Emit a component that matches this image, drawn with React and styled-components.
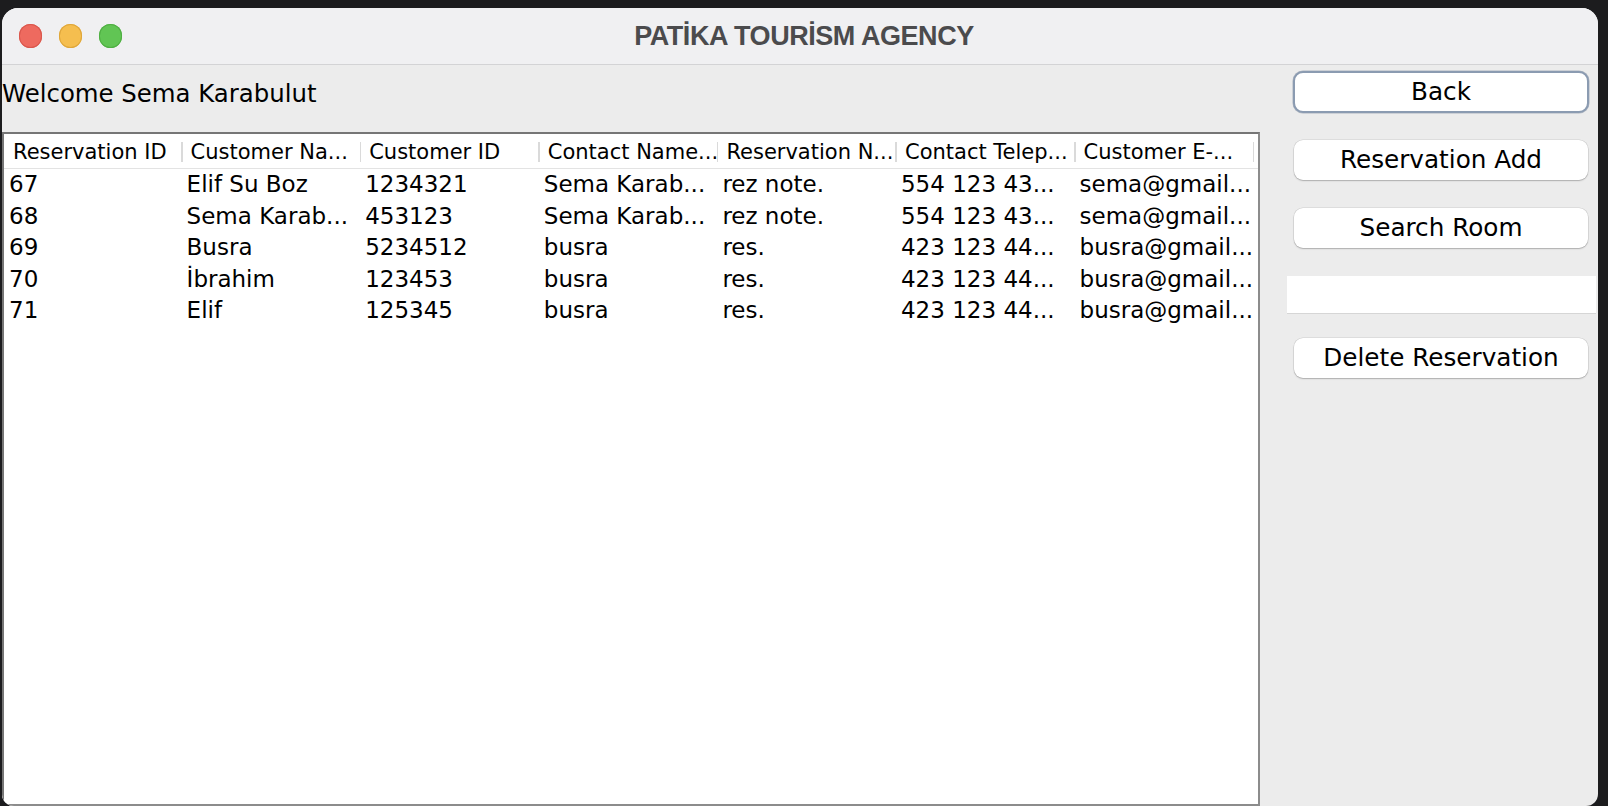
import styled, { createGlobalStyle } from "styled-components";

const GlobalStyle = createGlobalStyle`
    html, body {
        margin: 0;
        padding: 0;
        background: #1c1c1e;
    }
    * {
        box-sizing: border-box;
    }
`;

const columns = [
    "Reservation ID",
    "Customer Na...",
    "Customer ID",
    "Contact Name...",
    "Reservation N...",
    "Contact Telep...",
    "Customer E-...",
];

const reservations = [
    ["67", "Elif Su Boz", "1234321", "Sema Karab...", "rez note.", "554 123 43...", "sema@gmail..."],
    ["68", "Sema Karab...", "453123", "Sema Karab...", "rez note.", "554 123 43...", "sema@gmail..."],
    ["69", "Busra", "5234512", "busra", "res.", "423 123 44...", "busra@gmail..."],
    ["70", "İbrahim", "123453", "busra", "res.", "423 123 44...", "busra@gmail..."],
    ["71", "Elif", "125345", "busra", "res.", "423 123 44...", "busra@gmail..."],
];

const Desktop = styled.div`
    height: 806px;
    padding: 8px 10px 0 2px;
    background: #1c1c1e;
    overflow: hidden;
`;

const Window = styled.div`
    height: 798px;
    display: flex;
    flex-direction: column;
    background: #ececec;
    border-radius: 16px 16px 12px 12px;
    overflow: hidden;
`;

const TitleBar = styled.div`
    height: 57px;
    flex-shrink: 0;
    display: grid;
    grid-template-columns: 1fr auto 1fr;
    align-items: center;
    background: #f0f0f2;
    border-bottom: 1px solid #d3d3d5;
`;

const Lights = styled.div`
    display: flex;
    gap: 16.5px;
    padding-left: 16.5px;
`;

const Light = styled.span`
    width: 23.5px;
    height: 23.5px;
    border-radius: 50%;
    background: ${(p) => p.$color};
    box-shadow: inset 0 0 0 1px ${(p) => p.$edge};
`;

const Title = styled.div`
    font-family: "Liberation Sans", Arial, sans-serif;
    font-weight: 700;
    font-size: 27px;
    letter-spacing: -0.45px;
    color: #4b4b4d;
    padding-left: 8px;
`;

const Body = styled.div`
    flex: 1;
    min-height: 0;
    display: grid;
    grid-template-columns: 1258px 1fr;
    font-family: "DejaVu Sans", Verdana, sans-serif;
    color: #000;
`;

const Main = styled.div`
    display: flex;
    flex-direction: column;
    min-height: 0;
`;

const Welcome = styled.div`
    font-size: 24.4px;
    line-height: 28px;
    padding-top: 15px;
    margin-bottom: 24px;
`;

const Table = styled.div`
    flex: 1;
    background: #fff;
    border: 2px solid #8c8c8c;
    border-top-color: #767676;
    border-left-color: #767676;
    overflow: hidden;
`;

const Row = styled.div`
    display: grid;
    grid-template-columns: repeat(7, 178.6px) 1fr;
    height: ${(p) => (p.$header ? "35px" : "31.5px")};
    padding-top: ${(p) => (p.$header ? "1px" : "0")};
    border-bottom: ${(p) => (p.$header ? "1px solid #e3e3e3" : "none")};
`;

const HeadCell = styled.div`
    position: relative;
    display: flex;
    align-items: center;
    padding-left: ${(p) => (p.$first ? "9px" : "8px")};
    font-size: 21px;
    white-space: nowrap;
    overflow: hidden;

    &::after {
        content: "";
        position: absolute;
        right: 0;
        top: 7px;
        bottom: 6px;
        width: 1.5px;
        background: #dadada;
    }
`;

const Cell = styled.div`
    padding-left: ${(p) => (p.$first ? "5px" : "4px")};
    font-size: 23px;
    line-height: 31.5px;
    white-space: nowrap;
    overflow: hidden;
`;

const Side = styled.div`
    display: flex;
    flex-direction: column;
    padding-top: 6px;
`;

const Button = styled.button`
    width: ${(p) => (p.$focused ? "296px" : "294px")};
    height: ${(p) => (p.$focused ? "42px" : "40px")};
    margin-top: ${(p) => p.$mt}px;
    margin-left: ${(p) => (p.$focused ? "33px" : "34px")};
    padding: 0 0 2px;
    background: #fff;
    border: ${(p) => (p.$focused ? "2px solid #8b9bb1" : "none")};
    border-radius: ${(p) => (p.$focused ? "10px" : "9px")};
    box-shadow: ${(p) =>
        p.$focused
            ? "0 0 0 0.5px rgba(80, 100, 130, 0.4)"
            : "0 0 0 0.5px rgba(0, 0, 0, 0.12), 0 1px 1.5px rgba(0, 0, 0, 0.22)"};
    font-family: "DejaVu Sans", Verdana, sans-serif;
    font-size: 24.7px;
    color: #000;
`;

const SearchField = styled.input`
    width: 309px;
    height: 37px;
    margin-top: 28px;
    margin-left: 27px;
    border: none;
    background: #fff;
    box-shadow: 0 1px 0 #d6d6d6;
    font-family: "DejaVu Sans", Verdana, sans-serif;
    font-size: 22px;
    outline: none;
`;

function ReservationTable() {
    return (
        <Table>
            <Row $header>
                {columns.map((col, i) => (
                    <HeadCell key={col} $first={i === 0}>
                        {col}
                    </HeadCell>
                ))}
            </Row>
            {reservations.map((res) => (
                <Row key={res[0]}>
                    {res.map((val, i) => (
                        <Cell key={i} $first={i === 0}>
                            {val}
                        </Cell>
                    ))}
                </Row>
            ))}
        </Table>
    );
}

function App() {
    return (
        <>
            <GlobalStyle />
            <Desktop>
                <Window>
                    <TitleBar>
                        <Lights>
                            <Light $color="#ee6a5f" $edge="#d9574d" />
                            <Light $color="#f5be4f" $edge="#dea63b" />
                            <Light $color="#61c554" $edge="#4fae43" />
                        </Lights>
                        <Title>PATİKA TOURİSM AGENCY</Title>
                        <div />
                    </TitleBar>
                    <Body>
                        <Main>
                            <Welcome>Welcome Sema Karabulut</Welcome>
                            <ReservationTable />
                        </Main>
                        <Side>
                            <Button $focused $mt={0}>Back</Button>
                            <Button $mt={27}>Reservation Add</Button>
                            <Button $mt={28}>Search Room</Button>
                            <SearchField />
                            <Button $mt={25}>Delete Reservation</Button>
                        </Side>
                    </Body>
                </Window>
            </Desktop>
        </>
    );
}

export default App;
